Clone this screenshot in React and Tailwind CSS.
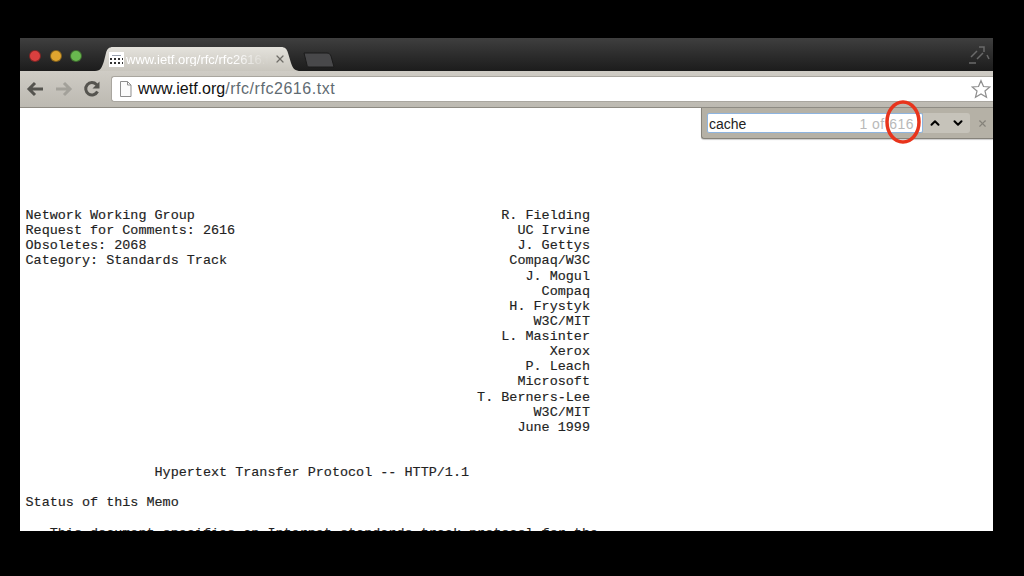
import { ChevronUp, ChevronDown, X } from 'lucide-react'

// 70 column rfc header, kept as preformatted text
const RFC_TEXT = `Network Working Group                                      R. Fielding
Request for Comments: 2616                                   UC Irvine
Obsoletes: 2068                                              J. Gettys
Category: Standards Track                                   Compaq/W3C
                                                              J. Mogul
                                                                Compaq
                                                            H. Frystyk
                                                               W3C/MIT
                                                           L. Masinter
                                                                 Xerox
                                                              P. Leach
                                                             Microsoft
                                                        T. Berners-Lee
                                                               W3C/MIT
                                                             June 1999


                Hypertext Transfer Protocol -- HTTP/1.1

Status of this Memo

   This document specifies an Internet standards track protocol for the`

function TrafficLight({ color }) {
  return <span className="w-[12px] h-[12px] rounded-full border border-black/40" style={{ background: color }} />
}

function Tab() {
  return (
    <div className="relative w-[206px] h-[24px] ml-[13px] flex items-center pl-[14px]">
      <svg className="absolute inset-0" width="206" height="24" viewBox="0 0 206 24">
        <defs>
          <linearGradient id="tabFill" x1="0" y1="0" x2="0" y2="1">
            <stop offset="0" stopColor="#e4e2dc" />
            <stop offset="1" stopColor="#c9c6be" />
          </linearGradient>
        </defs>
        <path d="M0 24 C6 24 7 20 9 14 L11 6 C12 2 14 0 18 0 L186 0 C190 0 192 2 193 6 L196 16 C198 22 200 24 206 24 Z" fill="url(#tabFill)" />
      </svg>
      <span className="relative w-[15px] h-[15px] bg-white flex flex-col items-center justify-center gap-[2px] shrink-0">
        <span className="w-[9px] h-[1px] bg-gray-400" />
        <span className="w-[13px] h-[2px] bg-[repeating-linear-gradient(90deg,#333_0_2px,transparent_2px_4px)]" />
        <span className="w-[13px] h-[2px] bg-[repeating-linear-gradient(90deg,#333_0_2px,transparent_2px_4px)]" />
      </span>
      <span className="relative ml-[2px] w-[143px] overflow-hidden whitespace-nowrap text-[13px] leading-none text-white font-['Liberation_Sans',sans-serif] [mask-image:linear-gradient(90deg,#000_75%,transparent)]">
        www.ietf.org/rfc/rfc2616.txt
      </span>
      <X className="relative ml-[5px] text-[#6f6d68]" size={12} strokeWidth={2.5} />
    </div>
  )
}

function NewTabButton() {
  return (
    <svg className="ml-[2px] mb-[3px]" width="32" height="16" viewBox="0 0 32 16">
      <path d="M1 1 L24 1 C26 1 27 2 28 4 L31 15 L6 15 C5 15 4 14 4 13 Z" fill="#48484a" stroke="#1b1b1b" />
    </svg>
  )
}

function Toolbar() {
  return (
    <div className="h-[37px] flex items-center pl-[5px] bg-gradient-to-b from-[#cfccc5] to-[#bcb9b1] border-b border-[#8e8b83]">
      <svg width="20" height="18" viewBox="0 0 20 18" className="text-[#55544f]">
        <path d="M18 9H5M10 3L4 9l6 6" fill="none" stroke="currentColor" strokeWidth="3" />
      </svg>
      <svg width="20" height="18" viewBox="0 0 20 18" className="ml-[9px] text-[#a3a19a]">
        <path d="M2 9h13M10 3l6 6-6 6" fill="none" stroke="currentColor" strokeWidth="3" />
      </svg>
      <svg width="18" height="18" viewBox="0 0 18 18" className="ml-[9px] text-[#55544f]">
        <path d="M14.5 11.5A6.2 6.2 0 1 1 13.5 4.5L15 6" fill="none" stroke="currentColor" strokeWidth="3" />
        <path d="M16.5 1.5V8.5H9.5Z" fill="currentColor" />
      </svg>
      <div className="ml-[10px] flex-1 h-[26px] bg-white rounded-l-[3px] border border-r-0 border-[#a9a69f] flex items-center pl-[7px] pr-[2px]">
        <svg width="13" height="16" viewBox="0 0 13 16">
          <path d="M1.5 .5H8.5L12 4V15.5H1.5Z M8.5 .5V4H12" fill="#fbfbfb" stroke="#8d8d8d" />
        </svg>
        <span className="ml-[6px] text-[16px] text-[#111] font-['Liberation_Sans',sans-serif]">
          www.ietf.org<span className="text-[#5f6b72] tracking-[0.55px]">/rfc/rfc2616.txt</span>
        </span>
        <svg className="ml-auto" width="20" height="20" viewBox="0 0 24 24">
          <path d="M12 2l3 7 7.500 .6-5.700 4.900 1.800 7.400L12 18l-6.600 3.900 1.800-7.400L1.500 9.600 9 9z" fill="#fff" stroke="#8f8f8f" strokeWidth="1.500" />
        </svg>
      </div>
    </div>
  )
}

function FindBar() {
  return (
    <div className="absolute top-0 right-0 w-[292px] h-[31px] bg-[#b5b1a6] border-b border-l border-[#85827a] rounded-bl-[3px] flex items-center pl-[5px] shadow-[0_1px_1px_rgba(0,0,0,0.2)]">
      <div className="w-[216px] h-[20px] bg-white rounded-[2px] border border-[#8db4e0] flex items-center justify-between pl-[1px] pr-[8px] pt-[2px] font-['Liberation_Sans',sans-serif] text-[14px]">
        <span className="text-[#222]">cache</span>
        <span className="text-[#b9b9b9] tracking-[0.5px]">1 of 616</span>
      </div>
      <div className="w-[47px] h-[20px] bg-[#c6c3ba] rounded-r-[3px] flex items-center justify-around text-black">
        <ChevronUp size={14} strokeWidth={3.5} />
        <ChevronDown size={14} strokeWidth={3.5} />
      </div>
      <X className="ml-[7px] text-[#85827a]" size={11} strokeWidth={2.5} />
    </div>
  )
}

export default function App() {
  return (
    <div className="w-[1024px] h-[576px] bg-black pt-[38px] pl-[20px] overflow-hidden">
      <div className="relative w-[973px] h-[493px] flex flex-col overflow-hidden bg-white">
        {/* tab strip */}
        <div className="h-[33px] shrink-0 flex items-end bg-gradient-to-b from-[#3f3f3f] to-[#1c1c1c] pl-[9px]">
          <div className="flex gap-[8.5px] items-center self-center mb-[-2px]">
            <TrafficLight color="#d9403f" />
            <TrafficLight color="#e0a52f" />
            <TrafficLight color="#69b84f" />
          </div>
          <Tab />
          <NewTabButton />
          <svg className="ml-auto mr-[3px] self-center" width="22" height="20" viewBox="0 0 22 20">
            <path d="M1 18H8M3 12l6-6M11 2h5v5M9 14l6-6M19 10l2 4" fill="none" stroke="#6a6a6a" strokeWidth="1.500" />
          </svg>
        </div>
        <Toolbar />
        <div className="relative flex-1 overflow-hidden">
          <pre className="pt-[100px] pl-[5.5px] font-['Liberation_Mono',monospace] text-[13.45px] leading-[15.13px] text-[#222] [-webkit-text-stroke:0.15px_#222]">{RFC_TEXT}</pre>
          <FindBar />
        </div>
        {/* red marker around the match count */}
        <svg className="absolute left-[861px] top-[59px]" width="44" height="50" viewBox="0 0 44 50">
          <ellipse cx="22" cy="25" rx="16" ry="20" fill="none" stroke="#e8341c" strokeWidth="3.500" />
        </svg>
      </div>
    </div>
  )
}
